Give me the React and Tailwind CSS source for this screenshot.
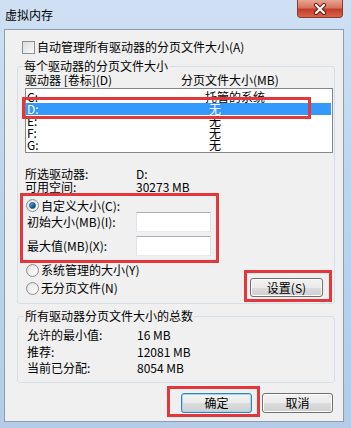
import React from 'react';

const font = "font-['Noto_Sans_CJK_SC','Noto_Sans',sans-serif]";

const Radio = ({ checked }) => (
  <span className="w-[13px] h-[13px] rounded-full border border-[#8e8f8f] bg-gradient-to-br from-[#d8d8d8] to-[#fafafa] flex items-center justify-center shrink-0">
    <span className="w-[9px] h-[9px] rounded-full bg-gradient-to-br from-[#e6e6e6] to-[#ffffff] flex items-center justify-center">
      {checked && <span className="w-[7px] h-[7px] rounded-full bg-gradient-to-br from-[#7fc4ee] via-[#1f6ea8] to-[#0d3a6a] border border-[#174f7d]" />}
    </span>
  </span>
);

const Button = ({ children, primary, className = '' }) => (
  <div className={`h-[20px] rounded-[3px] border flex items-center justify-center ${primary ? 'border-[#3c7fb1] shadow-[inset_0_0_0_1px_#9ed8f7]' : 'border-[#707070] shadow-[inset_0_0_0_1px_#fcfcfc]'} bg-[linear-gradient(#f2f2f2_0%,#ebebeb_50%,#dddddd_51%,#cfcfcf_100%)] ${className}`}>
    <span className="leading-[14px]">{children}</span>
  </div>
);

const drives = [
  { d: 'C:', size: '托管的系统', wide: true },
  { d: 'D:', size: '无', selected: true },
  { d: 'E:', size: '无' },
  { d: 'F:', size: '无' },
  { d: 'G:', size: '无' },
];

const Mark = ({ className }) => (
  <div className={`absolute border-[3px] border-[#e4373b] pointer-events-none ${className}`} />
);

export default function App() {
  return (
    <div className={`relative w-[351px] h-[428px] overflow-hidden bg-gradient-to-b from-[#cfe0f3] via-[#bcd3ec] to-[#b4cce7] text-[12px] text-black ${font}`}>
      {/* title bar */}
      <div className="h-[29px] flex items-start">
        <span className="ml-[5px] mt-[7px] leading-[16px] text-[12px]">虚拟内存</span>
        <div className="ml-auto mr-[8px] w-[46px] h-[18px] rounded-b-[4px] border border-t-0 border-[#8c3a2e] bg-[linear-gradient(#e8a593_0%,#d4745f_45%,#c23d26_55%,#d8644a_100%)] flex items-center justify-center">
          <svg width="14" height="12" viewBox="0 0 14 12">
            <path d="M3 2 L11 10 M11 2 L3 10" stroke="#5a1a12" strokeWidth="4" strokeLinecap="round" />
            <path d="M3 2 L11 10 M11 2 L3 10" stroke="#ffffff" strokeWidth="2.2" strokeLinecap="round" />
          </svg>
        </div>
      </div>

      {/* client area */}
      <div className="ml-[4px] w-[340px] h-[393px] border border-[#8a9db4] bg-[#f0f0f0] flex flex-col">
        <div className="mt-[10px] h-[14px] pl-[17px] flex items-center gap-[2px]">
          <span className="w-[13px] h-[13px] border border-[#8e8f8f] bg-gradient-to-br from-[#dcdcdc] to-[#fbfbfb] shrink-0" />
          <span className="leading-[14px]">自动管理所有驱动器的分页文件大小(A)</span>
        </div>

        {/* per drive group */}
        <div className="relative mt-[12px] ml-[12px] w-[318px] h-[238px] border border-[#d5dfe5] rounded-[3px] flex flex-col">
          <span className="absolute left-[5px] -top-[8px] px-[1px] leading-[14px] bg-[#f0f0f0]">每个驱动器的分页文件大小</span>
          <div className="mt-[6px] h-[13px] flex leading-[13px]">
            <span className="ml-[7px] w-[156px]">驱动器 [卷标](D)</span>
            <span>分页文件大小(MB)</span>
          </div>
          <div className="mt-[2px] ml-[7px] w-[308px] h-[65px] border border-[#828790] bg-white pt-[2px]">
            {drives.map((r) => (
              <div key={r.d} className={`h-[12px] leading-[12px] flex ${r.selected ? 'bg-[#3399ff] text-white mr-[1px]' : ''}`}>
                <span className="pl-[1px] w-[179px]">{r.d}</span>
                <span className={r.wide ? '' : 'ml-[4px]'}>{r.size}</span>
              </div>
            ))}
          </div>

          <div className="mt-[14px] h-[13px] leading-[13px] flex">
            <span className="ml-[7px] w-[111px]">所选驱动器:</span>
            <span>D:</span>
          </div>
          <div className="h-[13px] leading-[13px] flex">
            <span className="ml-[7px] w-[111px]">可用空间:</span>
            <span>30273 MB</span>
          </div>

          <div className="mt-[6px] h-[13px] ml-[8px] flex items-center gap-[2px]">
            <Radio checked />
            <span className="leading-[14px]">自定义大小(C):</span>
          </div>
          <div className="h-[20px] flex items-center">
            <span className="ml-[9px] w-[109px] leading-[14px]">初始大小(MB)(I):</span>
            <div className="w-[75px] h-[20px] bg-white border border-[#e2e3ea] border-t-[#abadb3] border-b-[#e3e9ef]" />
          </div>
          <div className="mt-[4px] h-[20px] flex items-center">
            <span className="ml-[9px] w-[109px] leading-[14px]">最大值(MB)(X):</span>
            <div className="w-[75px] h-[20px] bg-white border border-[#e2e3ea] border-t-[#abadb3] border-b-[#e3e9ef]" />
          </div>

          <div className="mt-[7px] flex">
            <div className="flex flex-col">
              <div className="h-[14px] ml-[8px] flex items-center gap-[2px]">
                <Radio />
                <span className="leading-[14px]">系统管理的大小(Y)</span>
              </div>
              <div className="mt-[4px] h-[14px] ml-[8px] flex items-center gap-[2px]">
                <Radio />
                <span className="leading-[14px]">无分页文件(N)</span>
              </div>
            </div>
            <Button className="ml-auto mr-[11px] mt-[15px] w-[73px] !h-[19px]">设置(S)</Button>
          </div>
        </div>

        {/* totals group */}
        <div className="relative mt-[12px] ml-[12px] w-[318px] h-[67px] border border-[#d5dfe5] rounded-[3px] flex flex-col">
          <span className="absolute left-[6px] -top-[8px] px-[1px] leading-[14px] bg-[#f0f0f0]">所有驱动器分页文件大小的总数</span>
          <div className="mt-[11px] h-[14px] leading-[14px] flex">
            <span className="ml-[9px] w-[110px]">允许的最小值:</span>
            <span>16 MB</span>
          </div>
          <div className="mt-[3px] h-[14px] leading-[14px] flex">
            <span className="ml-[9px] w-[110px]">推荐:</span>
            <span>12081 MB</span>
          </div>
          <div className="mt-[2px] h-[14px] leading-[14px] flex">
            <span className="ml-[9px] w-[110px]">当前已分配:</span>
            <span>8054 MB</span>
          </div>
        </div>

        <div className="mt-[10px] mr-[10px] flex justify-end gap-[10px]">
          <Button primary className="w-[71px]">确定</Button>
          <Button className="w-[71px]">取消</Button>
        </div>
      </div>

      {/* red annotation boxes */}
      <Mark className="left-[22px] top-[97px] w-[289px] h-[22px]" />
      <Mark className="left-[20px] top-[193px] w-[199px] h-[70px]" />
      <Mark className="left-[244px] top-[270px] w-[88px] h-[32px]" />
      <Mark className="left-[167px] top-[386px] w-[93px] h-[31px]" />
    </div>
  );
}
